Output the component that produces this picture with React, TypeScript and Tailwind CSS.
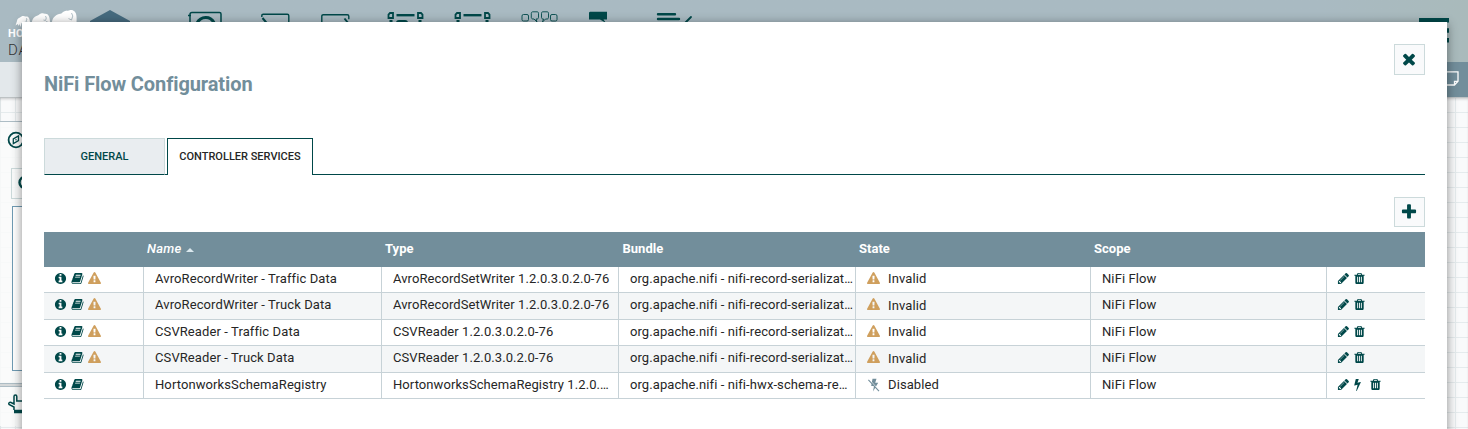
import type { ReactNode } from 'react';

const paths = {
  info: 'M1152 1376v-160q0-14-9-23t-23-9h-96v-512q0-14-9-23t-23-9h-320q-14 0-23 9t-9 23v160q0 14 9 23t23 9h96v320h-96q-14 0-23 9t-9 23v160q0 14 9 23t23 9h448q14 0 23-9t9-23zm-128-896v-160q0-14-9-23t-23-9h-192q-14 0-23 9t-9 23v160q0 14 9 23t23 9h192q14 0 23-9t9-23zm640 416q0 209-103 385.5t-279.5 279.5-385.5 103-385.5-103-279.5-279.5-103-385.5 103-385.5 279.5-279.5 385.5-103 385.5 103 279.5 279.5 103 385.5z',
  warning: 'M1024 1375v-190q0-14-9.5-23.5t-22.5-9.5h-192q-13 0-22.5 9.5t-9.5 23.5v190q0 14 9.5 23.5t22.5 9.5h192q13 0 22.5-9.5t9.5-23.5zm-2-374l18-459q0-12-10-19-13-11-24-11h-220q-11 0-24 11-10 7-10 21l17 457q0 10 10 16.5t24 6.5h185q14 0 23.5-6.5t10.5-16.5zm-14-934l768 1408q35 63-2 126-17 29-46.5 46t-63.5 17h-1536q-34 0-63.5-17t-46.5-46q-37-63-2-126l768-1408q17-31 47-49t65-18 65 18 47 49z',
  book: 'M1703 478q40 57 18 129l-275 906q-19 64-76.5 107.5t-122.5 43.5h-923q-77 0-148.5-53.5t-99.5-131.5q-24-67-2-127 0-4 3-27t4-37q1-8-3-21.5t-3-19.5q2-11 8-21t16.5-23.5 16.5-23.5q23-38 45-91.5t30-91.5q3-10 .5-30t-.5-28q3-11 17-28t17-23q21-36 42-92t25-90q1-9-2.5-32t.5-28q4-13 22-30.5t22-22.5q19-26 42.5-84.5t27.5-96.5q1-8-3-25.5t-2-26.5q2-8 9-18t18-23 17-21q8-12 16.5-30.5t15-35 16-36 19.5-32 26.5-23.5 36-11.5 47.5 5.5l-1 3q38-9 51-9h761q74 0 114 56t18 130l-274 906q-36 119-71.5 153.5t-128.5 34.5h-869q-27 0-38 15-11 16-1 43 24 70 144 70h923q29 0 56-15.5t35-41.5l300-987q7-22 5-57 38 15 59 43zm-1064 2q-4 13 2 22.5t20 9.5h608q13 0 25.5-9.5t16.5-22.5l21-64q4-13-2-22.5t-20-9.5h-608q-13 0-25.5 9.5t-16.5 22.5zm-83 256q-4 13 2 22.5t20 9.5h608q13 0 25.5-9.5t16.5-22.5l21-64q4-13-2-22.5t-20-9.5h-608q-13 0-25.5 9.5t-16.5 22.5z',
  pencil: 'M491 1536l91-91-235-235-91 91v107h128v128h107zm523-928q0-22-22-22-10 0-17 7l-542 542q-7 7-7 17 0 22 22 22 10 0 17-7l542-542q7-7 7-17zm-54-192l416 416-832 832h-416v-416zm683 96q0 53-37 90l-166 166-416-416 166-165q36-38 90-38 53 0 91 38l235 234q37 39 37 91z',
  trash: 'M704 1376v-704q0-14-9-23t-23-9h-64q-14 0-23 9t-9 23v704q0 14 9 23t23 9h64q14 0 23-9t9-23zm256 0v-704q0-14-9-23t-23-9h-64q-14 0-23 9t-9 23v704q0 14 9 23t23 9h64q14 0 23-9t9-23zm256 0v-704q0-14-9-23t-23-9h-64q-14 0-23 9t-9 23v704q0 14 9 23t23 9h64q14 0 23-9t9-23zm-544-992h448l-48-117q-7-9-17-11h-317q-10 2-17 11zm928 32v64q0 14-9 23t-23 9h-96v948q0 83-47 143.5t-113 60.5h-832q-66 0-113-58.5t-47-141.5v-952h-96q-14 0-23-9t-9-23v-64q0-14 9-23t23-9h309l70-167q15-37 54-63t79-26h320q40 0 79 26t54 63l70 167h309q14 0 23 9t9 23z',
  bolt: 'M1333 566q18 20 7 44l-540 1157q-13 25-42 25-4 0-14-2-17-5-25.5-19t-4.5-30l197-808-406 101q-4 1-12 1-18 0-31-11-18-15-13-39l201-825q4-14 16-23t28-9h328q19 0 32 12.5t13 29.5q0 8-5 18l-171 463 396-98q8-2 12-2 19 0 34 15z',
  times: 'M1490 1322q0 40-28 68l-136 136q-28 28-68 28t-68-28l-294-294-294 294q-28 28-68 28t-68-28l-136-136q-28-28-28-68t28-68l294-294-294-294q-28-28-28-68t28-68l136-136q28-28 68-28t68 28l294 294 294-294q28-28 68-28t68 28l136 136q28 28 28 68t-28 68l-294 294 294 294q28 28 28 68z',
  plus: 'M1600 736v192q0 40-28 68t-68 28h-416v416q0 40-28 68t-68 28h-192q-40 0-68-28t-28-68v-416h-416q-40 0-68-28t-28-68v-192q0-40 28-68t68-28h416v-416q0-40 28-68t68-28h192q40 0 68 28t28 68v416h416q40 0 68 28t28 68z',
};

function Icon({ name, className }: { name: keyof typeof paths; className: string }) {
  return (
    <svg viewBox="0 0 1792 1792" fill="currentColor" className={'shrink-0 overflow-visible ' + className}>
      <path d={paths[name]} />
    </svg>
  );
}

function BoltOff() {
  return (
    <svg viewBox="0 0 14 14" className="h-[14px] w-[14px] shrink-0 text-[#728e9b]">
      <path d="M5.500 .8h4L8.200 4.800h3L6 13.500 7 8H4.200z" fill="currentColor" />
      <path d="M2.400 1.800 12.400 12.600" stroke="white" strokeWidth="1" />
      <path d="M1.400 1.800 12 13.200" stroke="currentColor" strokeWidth="1.100" />
    </svg>
  );
}

const services = [
  { name: 'AvroRecordWriter - Traffic Data', type: 'AvroRecordSetWriter 1.2.0.3.0.2.0-76', bundle: 'org.apache.nifi - nifi-record-serialization-services-nar', valid: false },
  { name: 'AvroRecordWriter - Truck Data', type: 'AvroRecordSetWriter 1.2.0.3.0.2.0-76', bundle: 'org.apache.nifi - nifi-record-serialization-services-nar', valid: false },
  { name: 'CSVReader - Traffic Data', type: 'CSVReader 1.2.0.3.0.2.0-76', bundle: 'org.apache.nifi - nifi-record-serialization-services-nar', valid: false },
  { name: 'CSVReader - Truck Data', type: 'CSVReader 1.2.0.3.0.2.0-76', bundle: 'org.apache.nifi - nifi-record-serialization-services-nar', valid: false },
  { name: 'HortonworksSchemaRegistry', type: 'HortonworksSchemaRegistry 1.2.0.3.0.2.0-76', bundle: 'org.apache.nifi - nifi-hwx-schema-registry-service-nar', valid: true },
];

const columns = 'grid grid-cols-[100px_238px_237px_237px_235px_236px_98px]';

function Cell({ children, last }: { children: ReactNode; last?: boolean }) {
  return (
    <div className={'flex min-w-0 items-start pt-1 ' + (last ? 'pl-[10px]' : 'border-r border-[#c7d2d7] pl-[11px] pr-px')}>
      {children}
    </div>
  );
}

function ServiceRow({ service, index }: { service: (typeof services)[number]; index: number }) {
  const odd = index % 2 === 1;
  return (
    <div className={columns + ' border-b border-[#c7d2d7] ' + (odd ? 'h-[27px] bg-[#f4f6f7]' : 'h-[26px]')}>
      <div className="flex items-start gap-1 border-r border-[#c7d2d7] pt-[5px] pl-[10px] text-[#004849]">
        <Icon name="info" className="h-[13px] w-[13px]" />
        <Icon name="book" className="h-[13px] w-[13px]" />
        {!service.valid && <Icon name="warning" className="h-[13px] w-[13px] text-[#cf9f5d]" />}
      </div>
      <Cell><span className="truncate">{service.name}</span></Cell>
      <Cell><span className="truncate pr-[5px] tracking-[0.08px]">{service.type}</span></Cell>
      <Cell><span className={'truncate tracking-[0.085px] ' + (service.valid ? 'pr-1' : '')}>{service.bundle}</span></Cell>
      <Cell>
        <div className="pt-px">
          {service.valid ? <BoltOff /> : <Icon name="warning" className="h-[13px] w-[13px] text-[#cf9f5d]" />}
        </div>
        <span className={(service.valid ? 'ml-[7px]' : 'ml-2') + (odd ? ' mt-px' : '')}>{service.valid ? 'Disabled' : 'Invalid'}</span>
      </Cell>
      <Cell><span>NiFi Flow</span></Cell>
      <Cell last>
        <div className="-ml-[0.5px] flex items-center pt-px text-[#004849]">
          <Icon name="pencil" className="h-[13px] w-[13px]" />
          {service.valid && <Icon name="bolt" className="ml-px mr-[3px] h-[13px] w-[13px]" />}
          <Icon name="trash" className={service.valid ? 'ml-[2.5px] h-[13px] w-[13px]' : 'ml-[3px] h-[13px] w-[13px]'} />
        </div>
      </Cell>
    </div>
  );
}

function SquareButton({ icon, label, className }: { icon: 'times' | 'plus'; label: string; className: string }) {
  return (
    <button aria-label={label} className={'flex w-[31px] items-center justify-center border border-[#ccdadb] bg-[#f9fafb] pr-[1.5px] text-[#004849] ' + className}>
      <Icon name={icon} className="h-[18px] w-[18px]" />
    </button>
  );
}

function Herd() {
  return (
    <svg viewBox="0 0 72 26" fill="white" className="h-[26px] w-[72px] shrink-0">
      <path d="M7.500 16.500 9 12c0-2 1.500-3 3-3.500 1.200-1.800 4-2 5.500-1 2.500-.5 4 .5 4.500 5.500h-2.500l-1-1-1 2h-4l-1 4-1-3-1 2-.7-2z" />
      <path d="M24 14c0-4 2-6 5-7.200 2-.5 2-1.500 4-2.300 2-.8 3 0 4 .3 3-.6 5 3 5 8.200h-2l-1.500-1-1 2h-12z" />
      <path d="M44 14c0-5 3-7.500 7-9 2-.3 3-.6 4-2 2-1.600 4-1.200 6-1.600 2-1 4-.4 5 .6 2.500 1.500 3 6 2.500 12h-2.500l-2-1-1 2h-18z" />
      <path d="M18.500 9.200l.4 1.800-1.500 1.500M37.500 7l.8 2-.8 2.500-2-.5M63.500 4l1.300 3-1.300 4-3-1.500" fill="none" stroke="#a9bac2" strokeWidth=".9" />
    </svg>
  );
}

function Toolbar() {
  return (
    <header className="flex h-[62px] bg-linear-to-r from-[#a9bac2] from-90% to-[#a9babb] text-[#004849]">
      <div className="ml-2 flex w-[72px] flex-col pt-[9px]">
        <Herd />
        <span className="-mt-[8.5px] font-['Roboto'] text-[11px] leading-[13px] font-bold tracking-wide text-white">HORTONWORKS</span>
        <span className="mt-[2px] font-['Roboto'] text-[15px] leading-4 font-light tracking-wider text-[#333]">DATAFLOW</span>
      </div>
      <svg viewBox="0 0 40 44" className="ml-[10px] mt-[9px] h-[44px] w-10"><path d="M20 1 40 12v22L20 44 0 34V12z" fill="#456a7e" /></svg>
      <svg viewBox="0 0 36 36" fill="none" stroke="currentColor" strokeWidth="1.500" className="ml-[58px] mt-[11px] h-9 w-9">
        <path d="M2 36V3.500c0-1.500 1-2 2-2h27.500c1 0 1.500.5 1.500 1.500V36" /><path d="M0 4.500h3" /><path d="M9 12c4-7 13-7.500 17-.5" strokeWidth="3" />
      </svg>
      <svg viewBox="0 0 32 36" fill="none" stroke="currentColor" strokeWidth="1.400" className="ml-[37px] mt-[13px] h-9 w-8">
        <path d="M.8 4V2.700c0-1 .5-1.500 1.500-1.500h24c1 0 1.500.5 1.500 1.500V30" /><path d="M1.500 5l5 6" strokeWidth="2" />
      </svg>
      <svg viewBox="0 0 32 36" fill="none" stroke="currentColor" strokeWidth="1.400" className="ml-[28px] mt-[14px] h-9 w-8">
        <path d="M.8 30V2.200c0-1 .5-1.500 1.500-1.500h24c1 0 1.500.5 1.500 1.500v3" /><path d="M23.500 4.500l4 5" strokeWidth="2" />
      </svg>
      {[true, false].map((group) => (
        <svg key={String(group)} viewBox="0 0 38 36" fill="none" stroke="currentColor" className={'mt-[11px] h-9 w-[38px] ' + (group ? 'ml-[34px]' : 'ml-[29px]')}>
          <path d="M3 2h3v5H1.500V3.500z" strokeWidth="1.800" /><path d="M34 2h-3v5h4.500V3.500z" strokeWidth="1.800" />
          <path d="M9.500 4.200h18" strokeWidth="2.400" /><path d="M4 9v20M33 9v20" strokeWidth="3" />
          {group && <path d="M10 12c0-2 1-2 2-2h6c1 0 2 0 2 2" strokeWidth="2" />}
        </svg>
      ))}
      <svg viewBox="0 0 38 36" fill="none" stroke="currentColor" strokeWidth=".9" className="ml-[29px] mt-[11px] h-9 w-[38px]">
        <rect x="1" y="3.500" width="6.500" height="6.500" rx="1.500" />
        <path d="M12 .8h4c1 0 1.500.5 1.500 1.500v4c0 1-.5 1.700-1.500 1.700h-1l1 3-3-3h-1c-1 0-1.700-.7-1.700-1.700v-4c0-1 .7-1.500 1.700-1.500z" />
        <path d="M22 .8h4c1 0 1.500.5 1.500 1.500v4c0 1-.5 1.700-1.500 1.700h-1.500l-3 3 1-3H22c-1 0-1.500-.7-1.500-1.700v-4c0-1 .5-1.500 1.500-1.500z" />
        <rect x="29.500" y="3.500" width="6.500" height="6.500" rx="1.500" />
      </svg>
      <svg viewBox="0 0 20 36" fill="currentColor" className="ml-[30px] mt-[11px] h-9 w-5"><path d="M1 .8h17v7.700h-3.500L17 12l-6-3.500H0v-7z" /></svg>
      <svg viewBox="0 0 38 36" fill="none" stroke="currentColor" strokeWidth="2.400" strokeLinecap="round" className="ml-[46px] mt-[11px] h-9 w-[38px]">
        <path d="M3 3.300h17M3 8h21" /><path d="M30 12l6-6" strokeWidth="1.800" />
      </svg>
      <svg viewBox="0 0 30 36" className="ml-auto mr-[19px] mt-[17px] h-9 w-[30px]" stroke="currentColor" strokeWidth="4.600">
        <path d="M0 3.200h30M0 13.500h30M0 23.300h30" />
      </svg>
    </header>
  );
}

function Canvas() {
  return (
    <main className="flex-1 bg-[#f9fafb] bg-[linear-gradient(to_right,#e5ebed_1px,transparent_1px),linear-gradient(to_bottom,#e5ebed_1px,transparent_1px)] bg-[size:15px_15px] pt-6 shadow-[inset_0_3px_3px_-1px_rgba(0,0,0,0.2)]">
      <section className="h-[263px] w-[300px] border-y border-[#adbdc5] bg-[#f9fafbe0] pt-[9px]">
        <svg viewBox="0 0 18 18" fill="none" stroke="#004849" className="ml-[7px] h-[18px] w-[18px]">
          <circle cx="9" cy="9" r="7.400" strokeWidth="1.800" /><path d="M6.300 12.500V8L11.500 5v4.500z" strokeWidth="1.300" /><circle cx="9" cy="8.700" r=".7" fill="#004849" stroke="none" />
        </svg>
        <div className="ml-[11px] mt-[19px] flex h-[31px] w-[31px] items-center justify-center border border-[#ccdadb]">
          <svg viewBox="0 0 18 18" fill="none" stroke="#004849" strokeWidth="2.400" className="h-[18px] w-[18px]"><circle cx="7.500" cy="7.500" r="6" /><path d="m12 12 5 5" /></svg>
        </div>
        <div className="ml-3 mt-[7px] h-[165px] w-[270px] border border-[#6f9bb3] bg-white" />
      </section>
      <div className="h-[2px] w-[300px] bg-[#d5d9da]" />
      <section className="h-10 w-[300px] border-t border-[#adbdc5] bg-[#f9fafbe0] pt-[7px]">
        <svg viewBox="0 0 22 22" fill="none" stroke="#004849" strokeWidth="1.500" className="ml-[7px] h-[22px] w-[22px]">
          <path d="M7 16v-3L2 10.500c-1-2 1-2.500 2-2l3 1.500V2.500c0-2 2.800-2 2.800 0V7h6c2 0 3 1 3 3v8" /><path d="M7 17.500h13" strokeWidth="3.500" />
        </svg>
      </section>
    </main>
  );
}

export default function App() {
  return (
    <div className="relative h-[429px] w-full overflow-hidden font-['Roboto',sans-serif]">
      <div className="flex h-full flex-col">
        <Toolbar />
        <div className="flex h-[36px] shrink-0 border-b border-[#b5c2c8] bg-[#e3e8eb]">
          <div className="ml-auto flex w-[60px] justify-end bg-[#728e9b] pr-[9px] pt-[9px]">
            <svg viewBox="0 0 16 15" fill="none" stroke="white" strokeWidth="1.300" className="h-[15px] w-4"><path d="M0 .8h15v9.500L11.500 14H0M11.500 14v-3.700H15" /></svg>
          </div>
        </div>
        <div className="-mt-px flex flex-1 flex-col">
          <Canvas />
        </div>
      </div>

      <div role="dialog" className="absolute top-[22px] right-[21px] left-[22px] flex h-[460px] flex-col bg-white px-[22px] pt-[22px] shadow-[0_2px_10px_rgba(0,0,0,0.45)]">
        <div className="flex h-[94px] justify-between">
          <h1 className="pt-[27px] text-[20px] leading-[26px] font-bold tracking-[-0.1px] text-[#728e9b]">NiFi Flow Configuration</h1>
          <SquareButton icon="times" label="Close" className="h-[31px] pb-[1.5px]" />
        </div>
        <div className="flex h-[37px] text-[11px] font-medium">
          <div className="flex w-[121px] items-center justify-center border border-b-[#004849] border-[#ccdadb] bg-[#e9edf0] pt-px text-[#004849]">GENERAL</div>
          <div className="w-[2px] border-b border-[#004849]" />
          <div className="flex w-[146px] items-center justify-center border border-b-0 border-[#004849] text-[#262626]">CONTROLLER SERVICES</div>
          <div className="flex-1 border-b border-[#004849]" />
        </div>
        <div className="mt-[22px] flex justify-end">
          <SquareButton icon="plus" label="Create a new controller service" className="h-[30px] pb-px" />
        </div>
        <div className="mt-[5px] text-[13px] leading-4 tracking-[0.1px] text-[#262626]">
          <div className={columns + ' h-[35px] items-center bg-[#728e9b] pb-0.5 font-bold tracking-[0.02px] text-white'}>
            <span />
            <span className="flex items-center pl-[3px] font-medium tracking-[0.25px] italic">
              Name
              <svg viewBox="0 0 8 4" className="ml-[5px] mt-[3px] h-1 w-2"><path d="M0 4 4 0l4 4z" fill="#dbe8ee" /></svg>
            </span>
            <span className="pl-[3px]">Type</span>
            <span className="pl-[3.5px]">Bundle</span>
            <span className="pl-[3px]">State</span>
            <span className="pl-[3px]">Scope</span>
            <span />
          </div>
          {services.map((service, index) => (
            <ServiceRow key={service.name} service={service} index={index} />
          ))}
        </div>
      </div>
    </div>
  );
}
